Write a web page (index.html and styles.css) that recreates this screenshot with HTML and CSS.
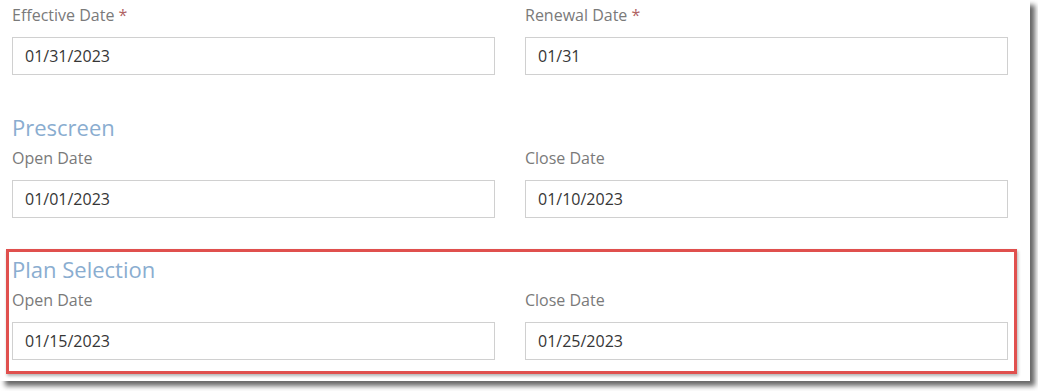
FILE: index.html
```html
<!DOCTYPE html>
<html lang="en">
<head>
<meta charset="utf-8">
<title>Dates</title>
<link rel="stylesheet" href="styles.css">
</head>
<body>
<div class="page">
  <div class="grid first">
    <div class="field">
      <label class="label">Effective Date <span class="req">*</span></label>
      <input class="input" type="text" value="01/31/2023" readonly>
    </div>
    <div class="field">
      <label class="label">Renewal Date <span class="req">*</span></label>
      <input class="input" type="text" value="01/31" readonly>
    </div>
  </div>

  <section class="section">
    <h2 class="heading">Prescreen</h2>
    <div class="grid">
      <div class="field">
        <label class="label">Open Date</label>
        <input class="input" type="text" value="01/01/2023" readonly>
      </div>
      <div class="field">
        <label class="label">Close Date</label>
        <input class="input" type="text" value="01/10/2023" readonly>
      </div>
    </div>
  </section>

  <section class="section">
    <h2 class="heading">Plan Selection</h2>
    <div class="grid">
      <div class="field">
        <label class="label">Open Date</label>
        <input class="input" type="text" value="01/15/2023" readonly>
      </div>
      <div class="field">
        <label class="label">Close Date</label>
        <input class="input" type="text" value="01/25/2023" readonly>
      </div>
    </div>
  </section>

  <div class="highlight"></div>
</div>
</body>
</html>
```

FILE: styles.css
```css
html, body {
  margin: 0;
  padding: 0;
  background: #ffffff;
}

body {
  font-family: "Open Sans", "Noto Sans", "DejaVu Sans", sans-serif;
  width: 1038px;
  height: 391px;
  overflow: hidden;
}

.page {
  position: relative;
  width: 1030px;
  height: 381px;
  background: #ffffff;
  box-shadow: 5px 5px 5px rgba(0, 0, 0, 0.6);
  padding: 4px 0 0 12px;
  box-sizing: border-box;
}

.grid {
  display: grid;
  grid-template-columns: 483px 483px;
  column-gap: 30px;
}

.field {
  display: flex;
  flex-direction: column;
}

.label {
  font-size: 16px;
  line-height: 22px;
  color: #7a7a7a;
  margin-bottom: 11px;
}

.req {
  color: #b06464;
}

.input {
  box-sizing: border-box;
  width: 483px;
  height: 38px;
  margin: 0;
  padding: 0 12px;
  border: 1px solid #d0d0d0;
  border-radius: 0;
  background: #ffffff;
  font-family: "Open Sans", "Noto Sans", "DejaVu Sans", sans-serif;
  font-size: 16px;
  color: #363636;
  outline: none;
}

.heading {
  margin: 37px 0 5px;
  font-size: 22px;
  line-height: 30px;
  font-weight: 400;
  color: #8aadd0;
}

.section + .section .heading {
  margin-top: 36px;
}

.highlight {
  position: absolute;
  left: 6px;
  top: 249px;
  width: 1011px;
  height: 125px;
  box-sizing: border-box;
  border: 3px solid #e0504e;
  box-shadow: 1px 2px 3px rgba(0, 0, 0, 0.3);
  pointer-events: none;
}
```
